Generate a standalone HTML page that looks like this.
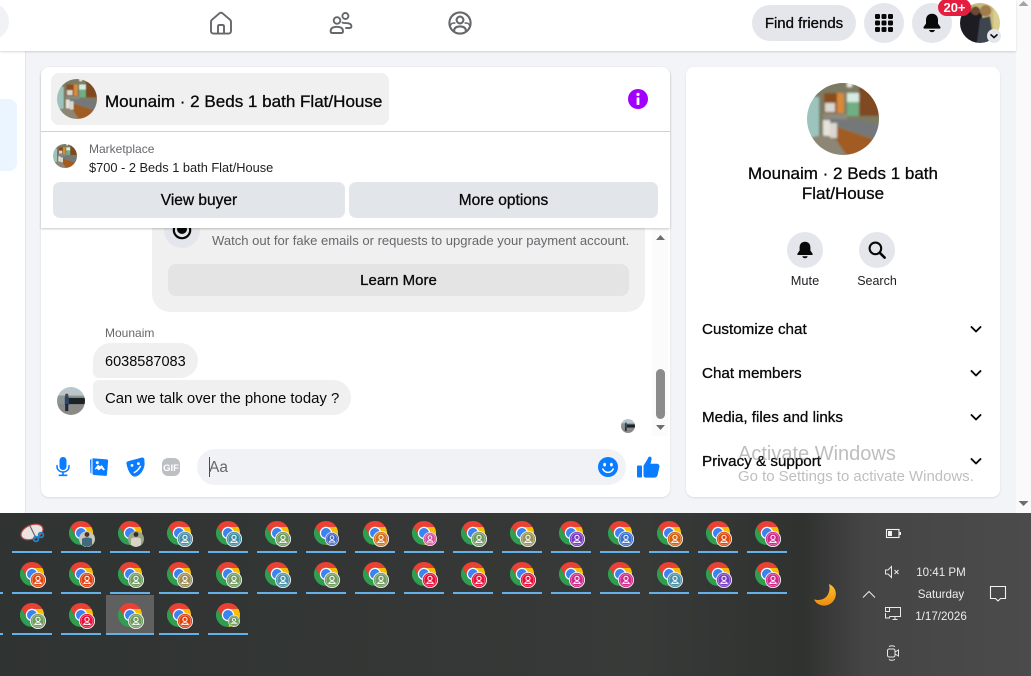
<!DOCTYPE html>
<html lang="en"><head><meta charset="utf-8"><title>Marketplace chat</title>
<style>
*{box-sizing:border-box}
html,body{margin:0;padding:0;width:1031px;height:676px;overflow:hidden;background:#f2f4f7;font-family:"Liberation Sans",sans-serif;color:#080809}
.a{position:absolute}
.t{position:absolute;white-space:nowrap}
.m{-webkit-text-stroke:.3px currentColor}
svg{position:absolute;display:block}
.btn{position:absolute;background:#e2e5ea;border-radius:7px;text-align:center;font-size:15.5px;line-height:38px;-webkit-text-stroke:.3px currentColor}
.rnd{position:absolute;border-radius:50%;background:#e4e6eb}
.row{position:absolute;left:702px;font-size:15.2px;line-height:20px;white-space:nowrap;-webkit-text-stroke:.3px currentColor}
</style></head><body>
<svg width="0" height="0" style="position:absolute">
<defs>
<clipPath id="cc"><circle cx="36" cy="36" r="36"/></clipPath>
<filter id="bl" x="-10%" y="-10%" width="120%" height="120%"><feGaussianBlur stdDeviation="1"/></filter>
<symbol id="kitchen" viewBox="0 0 72 72"><g clip-path="url(#cc)"><g filter="url(#bl)">
<rect x="-4" y="-4" width="80" height="80" fill="#7d7a62"/>
<rect x="-4" y="14" width="16" height="42" fill="#9cc4bc"/>
<rect x="17" y="10" width="14" height="20" fill="#8a4e1f"/>
<rect x="30" y="10" width="7" height="20" fill="#d98a3a"/>
<rect x="18" y="20" width="10" height="9" fill="#d8d8d2"/>
<rect x="40" y="10" width="12" height="23" fill="#6fae83"/>
<rect x="40" y="10" width="12" height="9" fill="#d6ebe2"/>
<rect x="52" y="4" width="24" height="29" fill="#7f4a20"/>
<rect x="16" y="31" width="24" height="6" fill="#8f8a7c"/>
<path d="M16 35L50 37 76 42V58L30 43 16 40Z" fill="#75787a"/>
<rect x="16" y="37" width="7" height="16" fill="#e4e2da"/>
<rect x="23" y="40" width="7" height="15" fill="#d9d7cf"/>
<path d="M30 44L68 57 56 76H36L30 64Z" fill="#a05c22"/>
<path d="M-4 56L16 52 30 58 42 76H-4Z" fill="#8d8674"/>
<rect x="40" y="0" width="5" height="4" fill="#f6f2e6"/>
</g></g></symbol>
<symbol id="person" viewBox="0 0 72 72"><g clip-path="url(#cc)"><g filter="url(#bl)">
<rect x="-4" y="-4" width="80" height="80" fill="#8d9695"/>
<rect x="-4" y="-4" width="80" height="26" fill="#b9c6cc"/>
<rect x="-4" y="44" width="80" height="32" fill="#8a8a86"/>
<path d="M30 28H76V44H30Z" fill="#1e2226"/>
<rect x="20" y="24" width="10" height="22" fill="#27456a"/>
<rect x="21" y="44" width="8" height="18" fill="#1f2a3a"/>
<circle cx="25" cy="21" r="4" fill="#5a4030"/>
</g></g></symbol>
<symbol id="me" viewBox="0 0 72 72"><g clip-path="url(#cc)"><g filter="url(#bl)">
<rect x="-4" y="-4" width="80" height="80" fill="#c6ba7c"/>
<rect x="-4" y="-4" width="24" height="80" fill="#4f4436"/>
<rect x="-4" y="16" width="44" height="60" fill="#1c1c20"/>
<circle cx="28" cy="14" r="8" fill="#6a4a34"/>
<path d="M36 28L54 24 62 76H30Z" fill="#3e4550"/>
<circle cx="46" cy="14" r="10" fill="#a17c4e"/>
<rect x="60" y="6" width="14" height="70" fill="#d8cf90"/>
</g></g></symbol>
<symbol id="chrome" viewBox="0 0 24 24">
<path d="M12 0A12 12 0 0 0 1.6 6L6.8 15A6 6 0 0 1 12 6H22.4A12 12 0 0 0 12 0Z" fill="#e94235"/>
<path d="M22.4 6H12A6 6 0 0 1 17.2 15L12 24A12 12 0 0 0 22.4 6Z" fill="#fbbc04"/>
<path d="M1.6 6A12 12 0 0 0 12 24L17.2 15A6 6 0 0 1 6.8 15Z" fill="#2f9e4f"/>
<circle cx="12" cy="12" r="6.2" fill="#fff"/><circle cx="12" cy="12" r="5" fill="#3b82f2"/>
</symbol>
<symbol id="b" viewBox="0 0 16 16">
<circle cx="8" cy="8" r="7.6" fill="currentColor" stroke="#eef0ea" stroke-width=".9"/>
<circle cx="8" cy="8" r="5.9" fill="none" stroke="#fff" stroke-opacity=".5" stroke-width=".6"/>
<circle cx="8" cy="6.4" r="2.1" fill="none" stroke="#fff" stroke-width="1"/>
<path d="M4.8 11.6C5 10.2 6 9.7 8 9.7S11 10.2 11.2 11.6Z" fill="none" stroke="#fff" stroke-width=".9"/>
</symbol>
</defs></svg>

<!-- page left column -->
<div class="a" style="left:0;top:0;width:26px;height:513px;background:#fff;border-right:1px solid #e4e6eb"></div>
<div class="a" style="left:-20px;top:99px;width:37px;height:72px;background:#ebf5ff;border-radius:8px"></div>

<!-- scrollbar -->
<div class="a" style="left:1016px;top:51px;width:15px;height:462px;background:#fafafa"></div>
<div class="a" style="left:1016px;top:0;width:15px;height:51px;background:#fafafa"></div>
<svg style="left:1016px;top:0" width="15" height="8"><path d="M2.5 6L7.5 1 12.5 6Z" fill="#a3a3a3"/></svg>
<svg style="left:1016px;top:499px" width="15" height="9"><path d="M2.5 2L7.5 7 12.5 2Z" fill="#6e6e6e"/></svg>

<!-- top nav -->
<div class="a" style="left:0;top:0;width:1016px;height:51px;background:#fff;box-shadow:0 1px 2px rgba(0,0,0,.16)"></div>
<div class="a" style="left:-40px;top:3px;width:49px;height:37px;background:#f0f2f5;border-radius:20px"></div>
<svg style="left:209px;top:11px" width="24" height="24" viewBox="0 0 24 24" fill="none" stroke="#65676b" stroke-width="1.9" stroke-linejoin="round"><path d="M2 10.8C2 10 2.3 9.4 3 8.7L10.6 2.2C11.4 1.6 12.6 1.6 13.4 2.2L21 8.7C21.7 9.4 22 10 22 10.8V20C22 21.3 21.1 22.6 19.5 22.6H4.5C2.9 22.6 2 21.3 2 20Z"/><path d="M9 22.6V15.5C9 14.6 9.6 14 10.5 14H13.5C14.4 14 15 14.6 15 15.5V22.6"/></svg>
<svg style="left:329px;top:11px" width="24" height="24" viewBox="0 0 24 24" fill="none" stroke="#65676b" stroke-width="1.9" stroke-linecap="round"><circle cx="8" cy="9.5" r="3.3"/><path d="M1.6 20.2C1.6 16.9 4 15.8 7.8 15.8S14 16.9 14 20.2C14 21.4 13.3 22 12 22H3.6C2.3 22 1.6 21.4 1.6 20.2Z"/><circle cx="16.4" cy="5" r="3"/><path d="M13.5 11.6C14.5 12 15.5 12.1 16.6 12.1 20 12.1 22.4 13 22.4 15.3 22.4 16.5 21.8 17 20.6 17H17"/></svg>
<svg style="left:448px;top:11px" width="24" height="24" viewBox="0 0 24 24" fill="none" stroke="#65676b" stroke-width="2.1"><circle cx="12" cy="12" r="10.6"/><circle cx="12" cy="9" r="3.4"/><path d="M6 20C6.2 16.8 8.4 15.4 12 15.4S17.8 16.8 18 20"/><path d="M2.4 14.6C3 12.4 5 11.6 7.4 12.2M21.6 14.6C21 12.4 19 11.6 16.6 12.2" stroke-width="1.6"/></svg>

<div class="a m" style="left:752px;top:5px;width:104px;height:36px;border-radius:18px;background:#e4e6eb;text-align:center;font-size:15px;line-height:38px">Find friends</div>
<div class="rnd" style="left:864px;top:3px;width:40px;height:40px"></div>
<svg style="left:874px;top:13px" width="20" height="20" viewBox="0 0 20 20" fill="#080809"><rect x="1" y="1" width="5" height="5" rx="1.2"/><rect x="7.5" y="1" width="5" height="5" rx="1.2"/><rect x="14" y="1" width="5" height="5" rx="1.2"/><rect x="1" y="7.5" width="5" height="5" rx="1.2"/><rect x="7.5" y="7.5" width="5" height="5" rx="1.2"/><rect x="14" y="7.5" width="5" height="5" rx="1.2"/><rect x="1" y="14" width="5" height="5" rx="1.2"/><rect x="7.5" y="14" width="5" height="5" rx="1.2"/><rect x="14" y="14" width="5" height="5" rx="1.2"/></svg>
<div class="rnd" style="left:912px;top:3px;width:40px;height:40px"></div>
<svg style="left:922px;top:13px" width="20" height="20" viewBox="0 0 20 20" fill="#080809"><path d="M10 .8C6 .8 4 3.6 4 7.2V10.6L1.6 14C1.2 14.8 1.6 15.6 2.5 15.6H17.5C18.4 15.6 18.8 14.8 18.4 14L16 10.6V7.2C16 3.6 14 .8 10 .8Z"/><path d="M7 17H13C12.6 18.4 11.5 19.2 10 19.2S7.4 18.4 7 17Z"/></svg>
<svg style="left:960px;top:3px" width="40" height="40" viewBox="0 0 40 40"><use href="#me" width="40" height="40"/></svg>
<div class="rnd" style="left:987px;top:29px;width:14px;height:14px;background:#e4e6eb"></div>
<svg style="left:987px;top:29px" width="14" height="14" viewBox="0 0 14 14" fill="none" stroke="#080809" stroke-width="1.6" stroke-linecap="round" stroke-linejoin="round"><path d="M4 5.8L7 8.6 10 5.8"/></svg>
<div class="a" style="left:938px;top:-1px;width:33px;height:17px;background:#e41e3f;border-radius:9px;color:#fff;text-align:center;font-size:13px;font-weight:bold;line-height:17px">20+</div>

<!-- chat card -->
<div class="a" style="left:41px;top:67px;width:629px;height:430px;background:#fff;border-radius:8px;box-shadow:0 1px 2px rgba(0,0,0,.1)"></div>

<!-- message area -->
<div class="a" style="left:152px;top:200px;width:493px;height:112px;background:#f0f0f0;border-radius:18px"></div>
<div class="rnd" style="left:164px;top:212px;width:36px;height:36px"></div>
<svg style="left:172px;top:220px" width="20" height="20" viewBox="0 0 20 20"><circle cx="10" cy="10" r="8.2" fill="none" stroke="#080809" stroke-width="2.2"/><circle cx="10" cy="9" r="5" fill="#080809"/></svg>
<div class="t" style="left:212px;top:232px;font-size:13.05px;line-height:17px;color:#65676b">Watch out for fake emails or requests to upgrade your payment account.</div>
<div class="a m" style="left:168px;top:264px;width:461px;height:32px;background:#e4e4e4;border-radius:8px;text-align:center;font-size:15px;line-height:33px">Learn More</div>

<div class="a" style="left:652px;top:229px;width:16px;height:207px;background:#fbfbfb"></div>
<svg style="left:654px;top:233px" width="13" height="9"><path d="M2 7L6.5 2 11 7Z" fill="#6e6e6e"/></svg>
<div class="a" style="left:656px;top:369px;width:9px;height:50px;background:#8b8b8b;border-radius:5px"></div>
<svg style="left:654px;top:423px" width="13" height="9"><path d="M2 2L6.5 7 11 2Z" fill="#6e6e6e"/></svg>

<div class="t" style="left:105px;top:325px;font-size:12px;line-height:16px;color:#65676b">Mounaim</div>
<div class="a" style="left:93px;top:343px;width:105px;height:35px;background:#f0f0f0;border-radius:18px 18px 18px 6px;font-size:14.5px;line-height:38px;padding-left:12px">6038587083</div>
<div class="a" style="left:93px;top:380px;width:258px;height:35px;background:#f0f0f0;border-radius:6px 18px 18px 18px;font-size:14.9px;line-height:38px;padding-left:12px;white-space:nowrap">Can we talk over the phone today ?</div>
<svg style="left:57px;top:387px" width="28" height="28" viewBox="0 0 28 28"><use href="#person" width="28" height="28"/></svg>
<svg style="left:621px;top:419px" width="14" height="14" viewBox="0 0 14 14"><use href="#person" width="14" height="14"/></svg>

<!-- composer -->
<svg style="left:54px;top:457px" width="18" height="20" viewBox="0 0 18 20" fill="#0a7cff"><rect x="5.5" y="0" width="7" height="13" rx="3.5"/><path d="M3 8.5V9.6C3 12.8 5.6 15 9 15S15 12.8 15 9.6V8.5" fill="none" stroke="#0a7cff" stroke-width="1.5" stroke-linecap="round"/><rect x="8.2" y="15" width="1.6" height="3"/><rect x="4.5" y="17.5" width="9" height="1.6" rx=".8"/></svg>
<svg style="left:89px;top:457px" width="20" height="20" viewBox="0 0 20 20" fill="#0a7cff"><path d="M1 3.5C1 2.6 1.6 2 2.4 2V16.5L1.4 16Z"/><path d="M3.5 1.2L17.8 2.4C18.6 2.5 19.2 3.2 19.1 4L18 17.6C18 18.4 17.2 19 16.4 18.9L5 18C4.2 18 3.5 17.3 3.5 16.5Z"/><path d="M6 11.5L9 7.6 11 9.4 12.6 8 16 12.6 14.6 13.5 12.2 11.4 9.8 13.4 7.6 11.6 6.4 12.6Z" fill="#fff"/><circle cx="8.3" cy="5.6" r="1.5" fill="#fff"/></svg>
<svg style="left:126px;top:457px" width="19" height="20" viewBox="0 0 19 20" fill="#0a7cff"><path d="M2 4.2L15.6.6C17 .3 18.2 1 18.4 2.4L18.6 6.6C18.6 13 13 20 8.4 19.6 4.6 19.2 1.6 13 .4 6.4.2 5.4 1 4.5 2 4.2Z"/><circle cx="6" cy="8.4" r="1.4" fill="#fff"/><circle cx="12.4" cy="6.6" r="1.4" fill="#fff"/><path d="M7.8 15.8C10.8 14.4 13.2 11.8 14.6 8.8" stroke="#fff" stroke-width="1.5" fill="none"/></svg>
<svg style="left:162px;top:458px" width="18" height="18" viewBox="0 0 18 18"><rect width="18" height="18" rx="6" fill="#bcc0c4"/><text x="9" y="12.8" text-anchor="middle" font-family="Liberation Sans,sans-serif" font-size="9.5" font-weight="bold" fill="#fff">GIF</text></svg>
<div class="a" style="left:197px;top:449px;width:429px;height:36px;background:#f0f2f5;border-radius:18px"></div>
<div class="a" style="left:209px;top:457px;width:1px;height:20px;background:#0a55c4"></div>
<div class="t" style="left:209px;top:459px;font-size:15.5px;line-height:18px;color:#65676b">Aa</div>
<svg style="left:598px;top:457px" width="20" height="20" viewBox="0 0 20 20"><circle cx="10" cy="10" r="10" fill="#0a7cff"/><ellipse cx="6.6" cy="7.6" rx="1.4" ry="1.9" fill="#fff"/><ellipse cx="13.4" cy="7.6" rx="1.4" ry="1.9" fill="#fff"/><path d="M4.8 12C6 14.4 7.8 15.4 10 15.4S14 14.4 15.2 12" fill="none" stroke="#fff" stroke-width="1.5" stroke-linecap="round"/></svg>
<svg style="left:637px;top:456px" width="23" height="22" viewBox="0 0 23 22" fill="#0a7cff"><rect x="0" y="9.5" width="5" height="12" rx="1"/><path d="M6.5 9.7L10.6 3C11 1.8 11.6 .4 13 .6 14.6.8 14.8 2.6 14.4 4.2L13.5 7.8H20C21.6 7.8 22.8 9.4 22.4 11L20.6 19C20.2 20.6 19 21.6 17.6 21.6H9C7.6 21.6 6.5 20.6 6.5 19.2Z"/></svg>

<!-- chat header overlay -->
<div class="a" style="left:41px;top:67px;width:629px;height:161px;background:#fff;border-radius:8px 8px 0 0;box-shadow:0 1px 2px rgba(0,0,0,.22)"></div>
<div class="a" style="left:51px;top:73px;width:338px;height:52px;background:#f0f0f0;border-radius:8px"></div>
<svg style="left:57px;top:79px" width="40" height="40" viewBox="0 0 40 40"><use href="#kitchen" width="40" height="40"/></svg>
<div class="t m" style="left:105px;top:91px;font-size:17.05px;line-height:22px">Mounaim · 2 Beds 1 bath Flat/House</div>
<svg style="left:628px;top:89px" width="20" height="20" viewBox="0 0 20 20"><circle cx="10" cy="10" r="10" fill="#a100ff"/><circle cx="10" cy="5.4" r="1.6" fill="#fff"/><rect x="8.6" y="8.4" width="2.8" height="7.6" rx=".8" fill="#fff"/></svg>
<div class="a" style="left:41px;top:131px;width:629px;height:1px;background:#cfd1d4"></div>
<svg style="left:53px;top:144px" width="24" height="24" viewBox="0 0 24 24"><use href="#kitchen" width="24" height="24"/></svg>
<div class="t" style="left:89px;top:141px;font-size:12px;line-height:16px;color:#65676b">Marketplace</div>
<div class="t" style="left:89px;top:160px;font-size:12.8px;line-height:16px;color:#1c1e21">$700 - 2 Beds 1 bath Flat/House</div>
<div class="btn" style="left:53px;top:182px;width:292px;height:36px">View buyer</div>
<div class="btn" style="left:349px;top:182px;width:309px;height:36px">More options</div>

<!-- right card -->
<div class="a" style="left:686px;top:67px;width:314px;height:430px;background:#fff;border-radius:8px;box-shadow:0 1px 2px rgba(0,0,0,.1)"></div>
<svg style="left:807px;top:83px" width="72" height="72" viewBox="0 0 72 72"><use href="#kitchen" width="72" height="72"/></svg>
<div class="a m" style="left:700px;top:164px;width:286px;text-align:center;font-size:17px;line-height:20px">Mounaim · 2 Beds 1 bath<br>Flat/House</div>
<div class="rnd" style="left:787px;top:232px;width:36px;height:36px"></div>
<svg style="left:796px;top:241px" width="18" height="18" viewBox="0 0 20 20" fill="#080809"><path d="M10 .8C6 .8 4 3.6 4 7.2V10.6L1.6 14C1.2 14.8 1.6 15.6 2.5 15.6H17.5C18.4 15.6 18.8 14.8 18.4 14L16 10.6V7.2C16 3.6 14 .8 10 .8Z"/><path d="M7 17H13C12.6 18.4 11.5 19.2 10 19.2S7.4 18.4 7 17Z"/></svg>
<div class="rnd" style="left:859px;top:232px;width:36px;height:36px"></div>
<svg style="left:868px;top:241px" width="18" height="18" viewBox="0 0 18 18" fill="none" stroke="#080809" stroke-width="2.1" stroke-linecap="round"><circle cx="7.4" cy="7.4" r="5.8"/><path d="M11.8 11.8L16.6 16.6" stroke-width="2.6"/></svg>
<div class="t" style="left:775px;width:60px;top:273px;text-align:center;font-size:12.8px;line-height:16px;color:#1c1e21">Mute</div>
<div class="t" style="left:847px;width:60px;top:273px;text-align:center;font-size:12.5px;line-height:16px;color:#1c1e21">Search</div>
<div class="row" style="top:320px">Customize chat</div>
<div class="row" style="top:364px">Chat members</div>
<div class="row" style="top:408px">Media, files and links</div>
<div class="row" style="top:452px">Privacy &amp; support</div>
<svg style="left:970px;top:323px" width="12" height="146" viewBox="0 0 12 146" fill="none" stroke="#080809" stroke-width="1.9" stroke-linecap="round" stroke-linejoin="round"><path d="M1.5 4L6 8.5 10.5 4M1.5 48L6 52.5 10.5 48M1.5 92L6 96.5 10.5 92M1.5 136L6 140.5 10.5 136"/></svg>
<div class="t" style="left:738px;top:442px;font-size:20px;line-height:24px;color:rgba(120,120,120,.48)">Activate Windows</div>
<div class="t" style="left:738px;top:468px;font-size:14.95px;line-height:18px;color:rgba(120,120,120,.48)">Go to Settings to activate Windows.</div>

<!-- taskbar -->
<div class="a" style="left:0;top:513px;width:1031px;height:163px;background:linear-gradient(90deg,#2f3331 0,#343735 40%,#383a39 62%,#303230 78%,#454545 84%,#4b4b4b 100%)"></div>
<div class="a" style="left:106px;top:595px;width:48px;height:38px;background:#606060"></div>
<svg style="left:0;top:513px" width="800" height="163" viewBox="0 513 800 163">
<g fill="#64b0e8">
<rect x="12" y="551" width="40" height="2"/><rect x="61" y="551" width="40" height="2"/><rect x="110" y="551" width="40" height="2"/><rect x="159" y="551" width="40" height="2"/><rect x="208" y="551" width="40" height="2"/><rect x="257" y="551" width="40" height="2"/><rect x="306" y="551" width="40" height="2"/><rect x="355" y="551" width="40" height="2"/><rect x="404" y="551" width="40" height="2"/><rect x="453" y="551" width="40" height="2"/><rect x="502" y="551" width="40" height="2"/><rect x="551" y="551" width="40" height="2"/><rect x="600" y="551" width="40" height="2"/><rect x="649" y="551" width="40" height="2"/><rect x="698" y="551" width="40" height="2"/><rect x="747" y="551" width="40" height="2"/>
<rect x="0" y="592" width="3" height="2"/><rect x="12" y="592" width="40" height="2"/><rect x="61" y="592" width="40" height="2"/><rect x="110" y="592" width="40" height="2"/><rect x="159" y="592" width="40" height="2"/><rect x="208" y="592" width="40" height="2"/><rect x="257" y="592" width="40" height="2"/><rect x="306" y="592" width="40" height="2"/><rect x="355" y="592" width="40" height="2"/><rect x="404" y="592" width="40" height="2"/><rect x="453" y="592" width="40" height="2"/><rect x="502" y="592" width="40" height="2"/><rect x="551" y="592" width="40" height="2"/><rect x="600" y="592" width="40" height="2"/><rect x="649" y="592" width="40" height="2"/><rect x="698" y="592" width="40" height="2"/><rect x="747" y="592" width="40" height="2"/>
<rect x="0" y="633" width="3" height="2"/><rect x="12" y="633" width="40" height="2"/><rect x="61" y="633" width="40" height="2"/><rect x="106" y="633" width="48" height="2"/><rect x="159" y="633" width="40" height="2"/><rect x="208" y="633" width="40" height="2"/>
</g>
<!-- snip -->
<g><ellipse cx="32" cy="532" rx="11.5" ry="7" transform="rotate(-22 32 532)" fill="#e9e4e2" stroke="#b8474a" stroke-width="1.2"/><path d="M30 526L36 538" stroke="#666" stroke-width="1.2"/><circle cx="36" cy="539" r="2.4" fill="none" stroke="#1c86c8" stroke-width="1.8"/><circle cx="41" cy="535" r="2.4" fill="none" stroke="#1c86c8" stroke-width="1.8"/></g>
<!-- row 1 chrome -->
<use href="#chrome" x="69" y="521" width="24" height="24"/><use href="#chrome" x="118" y="521" width="24" height="24"/><use href="#chrome" x="167" y="521" width="24" height="24"/><use href="#chrome" x="216" y="521" width="24" height="24"/><use href="#chrome" x="265" y="521" width="24" height="24"/><use href="#chrome" x="314" y="521" width="24" height="24"/><use href="#chrome" x="363" y="521" width="24" height="24"/><use href="#chrome" x="412" y="521" width="24" height="24"/><use href="#chrome" x="461" y="521" width="24" height="24"/><use href="#chrome" x="510" y="521" width="24" height="24"/><use href="#chrome" x="559" y="521" width="24" height="24"/><use href="#chrome" x="608" y="521" width="24" height="24"/><use href="#chrome" x="657" y="521" width="24" height="24"/><use href="#chrome" x="706" y="521" width="24" height="24"/><use href="#chrome" x="755" y="521" width="24" height="24"/>
<!-- row 1 photos -->
<circle cx="87" cy="539" r="8" fill="#c9c6bc"/><path d="M82 545V539C83 537 91 537 92 539V545L87 547Z" fill="#3f6a80"/><circle cx="87" cy="534.5" r="2.4" fill="#4a3428"/>
<circle cx="136" cy="539" r="8" fill="#9aa68a"/><path d="M131 545V539C132 537 140 537 141 539V545L136 547Z" fill="#d8d4c6"/><circle cx="136" cy="534.5" r="2.4" fill="#3a2c22"/>
<!-- row 1 badges -->
<use href="#b" x="177" y="531" width="16" height="16" style="color:#4a90a8"/><use href="#b" x="226" y="531" width="16" height="16" style="color:#3f8ea6"/><use href="#b" x="275" y="531" width="16" height="16" style="color:#6f9a60"/><use href="#b" x="325" y="532" width="14" height="14" style="color:#4263c8"/><use href="#b" x="373" y="531" width="16" height="16" style="color:#d2711a"/><use href="#b" x="423" y="532" width="14" height="14" style="color:#d6509c"/><use href="#b" x="471" y="531" width="16" height="16" style="color:#6f9a60"/><use href="#b" x="520" y="531" width="16" height="16" style="color:#97945a"/><use href="#b" x="569" y="531" width="16" height="16" style="color:#7a3cc4"/><use href="#b" x="618" y="531" width="16" height="16" style="color:#3d6fd0"/><use href="#b" x="667" y="531" width="16" height="16" style="color:#d5600f"/><use href="#b" x="716" y="531" width="16" height="16" style="color:#e0480f"/><use href="#b" x="765" y="531" width="16" height="16" style="color:#d0288c"/>
<!-- row 2 -->
<use href="#chrome" x="20" y="562" width="24" height="24"/><use href="#chrome" x="69" y="562" width="24" height="24"/><use href="#chrome" x="118" y="562" width="24" height="24"/><use href="#chrome" x="167" y="562" width="24" height="24"/><use href="#chrome" x="216" y="562" width="24" height="24"/><use href="#chrome" x="265" y="562" width="24" height="24"/><use href="#chrome" x="314" y="562" width="24" height="24"/><use href="#chrome" x="363" y="562" width="24" height="24"/><use href="#chrome" x="412" y="562" width="24" height="24"/><use href="#chrome" x="461" y="562" width="24" height="24"/><use href="#chrome" x="510" y="562" width="24" height="24"/><use href="#chrome" x="559" y="562" width="24" height="24"/><use href="#chrome" x="608" y="562" width="24" height="24"/><use href="#chrome" x="657" y="562" width="24" height="24"/><use href="#chrome" x="706" y="562" width="24" height="24"/><use href="#chrome" x="755" y="562" width="24" height="24"/>
<use href="#b" x="30" y="572" width="16" height="16" style="color:#e0480f"/><use href="#b" x="79" y="572" width="16" height="16" style="color:#e0400f"/><use href="#b" x="128" y="572" width="16" height="16" style="color:#6f9a60"/><use href="#b" x="177" y="572" width="16" height="16" style="color:#9a8c55"/><use href="#b" x="226" y="572" width="16" height="16" style="color:#6f9a60"/><use href="#b" x="275" y="572" width="16" height="16" style="color:#4a90a8"/><use href="#b" x="324" y="572" width="16" height="16" style="color:#6f9a60"/><use href="#b" x="373" y="572" width="16" height="16" style="color:#6f9a60"/><use href="#b" x="422" y="572" width="16" height="16" style="color:#e8103a"/><use href="#b" x="471" y="572" width="16" height="16" style="color:#e8103a"/><use href="#b" x="520" y="572" width="16" height="16" style="color:#e8103a"/><use href="#b" x="569" y="572" width="16" height="16" style="color:#d0288c"/><use href="#b" x="618" y="572" width="16" height="16" style="color:#d0288c"/><use href="#b" x="667" y="572" width="16" height="16" style="color:#4a90a8"/><use href="#b" x="716" y="572" width="16" height="16" style="color:#7a3cc4"/><use href="#b" x="765" y="572" width="16" height="16" style="color:#d0288c"/>
<!-- row 3 -->
<use href="#chrome" x="20" y="603" width="24" height="24"/><use href="#chrome" x="69" y="603" width="24" height="24"/><use href="#chrome" x="118" y="603" width="24" height="24"/><use href="#chrome" x="167" y="603" width="24" height="24"/><use href="#chrome" x="216" y="603" width="24" height="24"/>
<use href="#b" x="30" y="613" width="16" height="16" style="color:#6f9a60"/><use href="#b" x="79" y="613" width="16" height="16" style="color:#e8103a"/><use href="#b" x="128" y="613" width="16" height="16" style="color:#6f9a60"/><use href="#b" x="177" y="613" width="16" height="16" style="color:#e0400f"/><use href="#b" x="228" y="615" width="12" height="12" style="color:#6f9a60"/>
</svg>

<!-- tray -->
<svg style="left:813px;top:583px" width="24" height="24" viewBox="0 0 24 24"><defs><linearGradient id="mn" x1="0" y1="0" x2="0" y2="1"><stop offset="0" stop-color="#f9c32b"/><stop offset="1" stop-color="#ef8b12"/></linearGradient></defs><path d="M16 1C20.6 3 23.4 7.4 22.8 12 22 18.6 16.4 23 10.4 22.6 6 22.2 2.6 20 1 16.4 6.6 18 11.6 16.4 14.4 12.4 16.6 9 17 4.8 16 1Z" fill="url(#mn)"/></svg>
<svg style="left:862px;top:588px" width="14" height="12" fill="none" stroke="#e8e8e8" stroke-width="1.1"><path d="M1 9.5L7 3.5 13 9.5"/></svg>
<svg style="left:885px;top:528px" width="18" height="12" fill="none" stroke="#f2f2f2" stroke-width="1.1"><rect x="1.5" y="1.5" width="12.5" height="8"/><rect x="3" y="3" width="4" height="5" fill="#f2f2f2" stroke="none"/><rect x="14.6" y="4" width="1.4" height="3" fill="#f2f2f2" stroke="none"/></svg>
<svg style="left:884px;top:565px" width="17" height="14" fill="none" stroke="#e8e8e8" stroke-width="1"><path d="M1.5 5H4L7.5 1.5V12.5L4 9H1.5Z"/><path d="M10.5 5L14.5 9M14.5 5L10.5 9"/></svg>
<svg style="left:884px;top:606px" width="18" height="15" fill="none" stroke="#e8e8e8" stroke-width="1"><path d="M5.5 1.5H16.5V10.5H5.5M1.5 7V12H5.5V10.5M8.5 13.5H13.5M11 10.5V13.5"/><rect x="1.5" y="1.5" width="4" height="4"/></svg>
<svg style="left:885px;top:644px" width="16" height="18" fill="none" stroke="#e8e8e8" stroke-width="1"><rect x="2.5" y="5" width="7.5" height="8" rx="1.6"/><path d="M10 8L13.5 6V12L10 10M4 2.6C5.5 1.6 8 1.6 10 2.6M4 15.4C5.5 16.4 8 16.4 10 15.4"/></svg>
<div class="t" style="left:901px;width:80px;top:565px;text-align:center;font-size:11.6px;line-height:16px;color:#ececec">10:41 PM</div>
<div class="t" style="left:901px;width:80px;top:587px;text-align:center;font-size:11.6px;line-height:16px;color:#ececec">Saturday</div>
<div class="t" style="left:901px;width:80px;top:609px;text-align:center;font-size:11.6px;line-height:16px;color:#ececec">1/17/2026</div>
<svg style="left:989px;top:585px" width="18" height="18" fill="none" stroke="#f2f2f2" stroke-width="1.1"><path d="M1.5 1.5H16.5V13.5H11.5L9 16 6.5 13.5H1.5Z"/></svg>
</body></html>
